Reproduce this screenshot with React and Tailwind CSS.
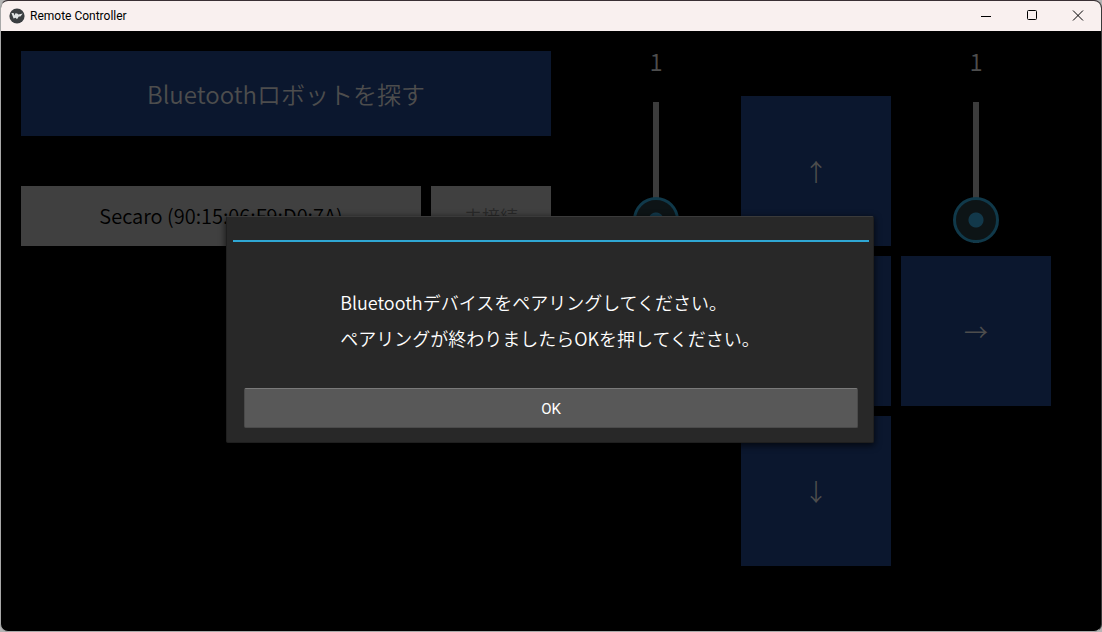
import { useState } from "react";

function AppLogo() {
  return (
    <svg viewBox="0 0 16 16" className="size-4" aria-hidden="true">
      <circle cx="8" cy="8" r="7.6" fill="#3a3e41" />
      <path d="M2.4 5 L4.6 5 L5.4 7.4 L6.4 5.2 L8.2 5.4 L9.4 6.6 L13.8 5.6 L11.4 8.4 L9.8 8.6 L8 11.2 L6.6 9.8 L4.6 10.4 Z" fill="#dfe3e4" />
    </svg>
  );
}

function CaptionButton({ label, children }) {
  return (
    <button type="button" aria-label={label} className="flex h-full w-[46px] items-center justify-center text-black">
      <svg viewBox="0 0 12 12" className="size-3" fill="none" stroke="currentColor" aria-hidden="true">
        {children}
      </svg>
    </button>
  );
}

function TitleBar() {
  return (
    <header className="flex h-[30px] shrink-0 items-center bg-[#f9f0ef] pl-2">
      <AppLogo />
      <h1 className="ml-[5px] flex-1 font-[Roboto,sans-serif] text-[12px] leading-4 font-normal text-black">Remote Controller</h1>
      <CaptionButton label="Minimize">
        <path d="M1 6.5h10" />
      </CaptionButton>
      <CaptionButton label="Maximize">
        <rect x="1.5" y="0.5" width="9" height="9" rx="1" />
      </CaptionButton>
      <CaptionButton label="Close">
        <path d="M1 0.5l10 10M11 0.5L1 10.5" />
      </CaptionButton>
    </header>
  );
}

function PadButton({ label, place, children }) {
  return (
    <button type="button" aria-label={label} className={`h-[150px] self-end bg-[#0b172e] text-2xl text-[#4d4d4d] ${place}`}>
      {children}
    </button>
  );
}

function SpeedSlider({ id, place }) {
  const [value, setValue] = useState(1);
  return (
    <div className={`flex flex-col items-center ${place}`}>
      <label htmlFor={id} className="text-2xl leading-5 text-[#4d4d4d]">
        {value}
      </label>
      <input
        id={id}
        type="range"
        min="1"
        max="10"
        value={value}
        onChange={(e) => setValue(Number(e.target.value))}
        className="mt-[31px] h-[141px] w-[46px] appearance-none bg-transparent [direction:rtl] [writing-mode:vertical-lr] [&::-webkit-slider-runnable-track]:w-[6px] [&::-webkit-slider-runnable-track]:bg-[#3c3c3c] [&::-webkit-slider-thumb]:-ml-5 [&::-webkit-slider-thumb]:size-[46px] [&::-webkit-slider-thumb]:appearance-none [&::-webkit-slider-thumb]:rounded-full [&::-webkit-slider-thumb]:border-[3px] [&::-webkit-slider-thumb]:border-[#10394a] [&::-webkit-slider-thumb]:bg-[radial-gradient(circle,#12384a_7px,#0d1416_8px)]"
      />
    </div>
  );
}

function ControlPad() {
  return (
    <div className="grid grid-cols-[150px_150px_150px] grid-rows-[195px_150px_150px] gap-[10px]">
      <SpeedSlider id="left-speed" place="col-start-1 row-start-1" />
      <SpeedSlider id="right-speed" place="col-start-3 row-start-1" />
      <PadButton label="Forward" place="col-start-2 row-start-1">↑</PadButton>
      <PadButton label="Left" place="col-start-1 row-start-2" />
      <PadButton label="Stop" place="col-start-2 row-start-2" />
      <PadButton label="Right" place="col-start-3 row-start-2">→</PadButton>
      <PadButton label="Back" place="col-start-2 row-start-3">↓</PadButton>
    </div>
  );
}

function PairingDialog({ onClose }) {
  return (
    <div className="absolute inset-0 flex items-center justify-center pr-[2px] pb-[3px]">
      <div
        role="dialog"
        aria-modal="true"
        aria-describedby="pairing-text"
        className="flex w-[648px] flex-col rounded-xs border border-[#1f1f1f] border-t-[#3a3a3a] bg-[#282828] px-[6px] pt-[23px] pb-[14px] shadow-[0_2px_6px_1px_rgba(0,0,0,0.6)]"
      >
        <div className="-mr-[2px] h-[2px] bg-[#2fa7d4]" />
        <p id="pairing-text" className="mt-[42px] self-center text-lg leading-9 text-white">
          Bluetoothデバイスをペアリングしてください。
          <br />
          ペアリングが終わりましたらOKを押してください。
        </p>
        <button
          type="button"
          onClick={onClose}
          className="mt-8 mr-[9px] ml-[11px] h-10 rounded-xs border border-[#4a4a4a] border-t-[#7a7a7a] bg-[#585858] pt-[2px] font-[Roboto,sans-serif] text-[15px] font-normal text-white"
        >
          OK
        </button>
      </div>
    </div>
  );
}

export default function App() {
  const [open, setOpen] = useState(true);
  return (
    <div className="min-h-screen bg-[#b4b4b4]">
      <div className="flex min-h-screen flex-col overflow-hidden rounded-lg border border-[#a8a8a8] border-t-[#3a3034] border-r-[#3a3a3a] bg-black font-['Noto_Sans_CJK_JP',sans-serif] font-[350]">
        <TitleBar />
        <main className="relative flex flex-1 items-start gap-[30px] pt-5 pr-[50px] pl-5">
          <section className="flex-1">
            <button type="button" className="h-[85px] w-full bg-[#0b172e] text-2xl text-[#4d4d4d]">
              Bluetoothロボットを探す
            </button>
            <div className="mt-[50px] flex h-[60px] gap-[10px] text-lg">
              <button type="button" className="flex-1 bg-[#404040] text-xl text-black">
                Secaro (90:15:06:F9:D0:7A)
              </button>
              <button type="button" className="w-[120px] bg-[#404040] text-[#292929]">
                未接続
              </button>
            </div>
          </section>
          <ControlPad />
          {open && <PairingDialog onClose={() => setOpen(false)} />}
        </main>
      </div>
    </div>
  );
}
